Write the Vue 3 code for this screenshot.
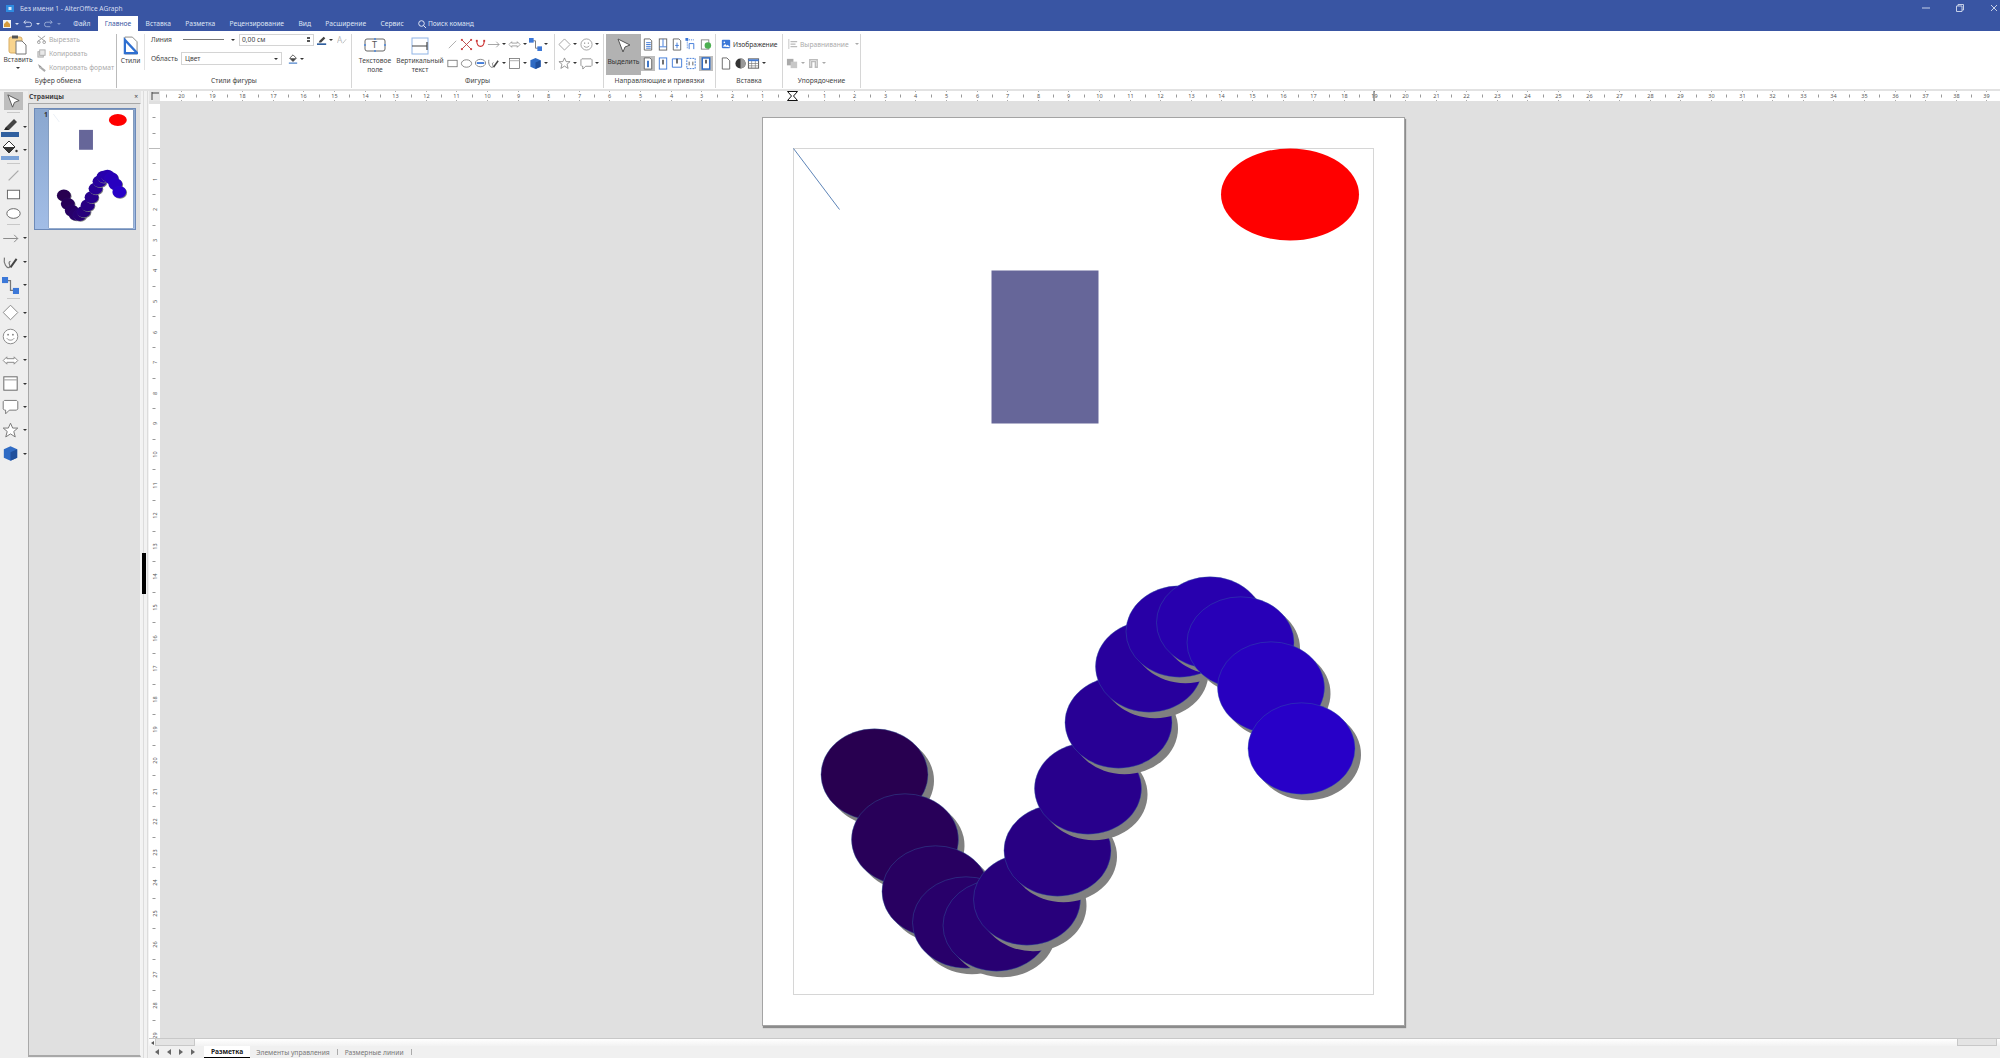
<template>
  <div class="app">
    <svg class="defs" width="0" height="0">
      <defs>
        <g id="shapes">
          <line x1="31" y1="31" x2="77" y2="92" stroke="#3465a4" stroke-width="0.8" />
          <ellipse cx="527.5" cy="77" rx="69" ry="46" fill="#ff0000" />
          <rect x="229" y="153" width="107" height="153" fill="#666699" />
          <g v-for="(e, i) in blobs" :key="i">
            <ellipse :cx="e.x + 6" :cy="e.y + 6" rx="53.5" ry="45.7" fill="#808080" />
            <ellipse :cx="e.x" :cy="e.y" rx="53.5" ry="45.7" :fill="e.color" stroke="#3465a4" stroke-width="0.4" />
          </g>
        </g>
        <symbol id="i-paste" viewBox="0 0 20 20">
          <rect x="1" y="2" width="13" height="16" rx="2" fill="#f8d48e" stroke="#d9ad62" />
          <rect x="4" y="0.5" width="6" height="3" fill="#555" />
          <path d="M8 6h6l4 4v9H8z" fill="#fff" stroke="#777" />
        </symbol>
        <symbol id="i-cut" viewBox="0 0 10 10">
          <path d="M1 1l8 6M9 1L1 7" stroke="#999" fill="none" />
          <circle cx="2" cy="8" r="1.5" fill="none" stroke="#999" />
          <circle cx="8" cy="8" r="1.5" fill="none" stroke="#999" />
        </symbol>
        <symbol id="i-copy" viewBox="0 0 10 10">
          <rect x="1" y="3" width="6" height="6" fill="#ddd" stroke="#aaa" />
          <rect x="3" y="1" width="6" height="6" fill="#e8e8e8" stroke="#aaa" />
        </symbol>
        <symbol id="i-brush" viewBox="0 0 10 10">
          <path d="M1 1l4 3-2 2z" fill="#999" />
          <path d="M4 5l5 4" stroke="#aaa" stroke-width="2.4" />
        </symbol>
        <symbol id="i-styles" viewBox="0 0 16 20">
          <path d="M2 1h8l5 5v13H2z" fill="#fff" stroke="#888" />
          <path d="M2 4v14h13z" fill="none" stroke="#2f6fd0" stroke-width="2.4" />
        </symbol>
        <symbol id="i-pen" viewBox="0 0 12 12">
          <path d="M3 7l5-5 2 2-5 5H2z" fill="#444" />
          <rect x="0" y="10" width="11" height="2" fill="#2f5f9f" />
        </symbol>
        <symbol id="i-bucket" viewBox="0 0 12 12">
          <path d="M6 1l4 4-4 4-4-4z" fill="#fff" stroke="#444" />
          <path d="M2 5h8l-4 4z" fill="#444" />
          <rect x="1" y="10" width="10" height="2" fill="#7ba3d8" />
        </symbol>
        <symbol id="t-pen" viewBox="0 0 18 22">
          <path d="M5 11l8-8 3 3-8 8H4z" fill="#444" />
          <path d="M3 14l2-3 3 3z" fill="#222" />
          <rect x="0" y="16" width="18" height="5" fill="#2f5f9f" />
        </symbol>
        <symbol id="t-bucket" viewBox="0 0 18 22">
          <path d="M8 2l6 6-6 6-6-6z" fill="#fff" stroke="#333" />
          <path d="M2 8h12l-6 6z" fill="#333" />
          <circle cx="15.500" cy="12" r="1.200" fill="#333" />
          <rect x="0" y="17" width="18" height="4" fill="#7ba3d8" />
        </symbol>
        <symbol id="i-aa" viewBox="0 0 12 12">
          <text x="0" y="10" font-size="10" fill="#bbb" font-family="Noto Sans, sans-serif">A</text>
          <path d="M7 10l4-5" stroke="#bbb" />
        </symbol>
        <symbol id="i-textbox" viewBox="0 0 24 16">
          <rect x="2" y="2" width="20" height="12" rx="2" fill="none" stroke="#666" />
          <text x="9" y="11" font-size="9" fill="#555" font-family="Noto Sans, sans-serif">T</text>
          <circle cx="2" cy="8" r="1" fill="#4a86d8" /><circle cx="22" cy="8" r="1" fill="#4a86d8" />
          <circle cx="12" cy="2" r="1" fill="#4a86d8" /><circle cx="12" cy="14" r="1" fill="#4a86d8" />
        </symbol>
        <symbol id="i-vtext" viewBox="0 0 18 18">
          <rect x="1" y="1" width="16" height="16" fill="none" stroke="#8fb4e6" />
          <path d="M1 9h15M16 5v8" stroke="#444" stroke-width="1.2" fill="none" />
        </symbol>
        <symbol id="i-line" viewBox="0 0 14 14"><path d="M3 11l8-8" stroke="#aaa" /></symbol>
        <symbol id="i-points" viewBox="0 0 14 14">
          <path d="M2 2l10 10M12 2L2 12" stroke="#b44" />
          <g fill="#c44"><rect x="1" y="1" width="2" height="2" /><rect x="11" y="1" width="2" height="2" /><rect x="1" y="11" width="2" height="2" /><rect x="11" y="11" width="2" height="2" /></g>
        </symbol>
        <symbol id="i-bezier" viewBox="0 0 14 14">
          <path d="M3 3c0 8 8 8 8 0" stroke="#c33" fill="none" stroke-width="1.2" />
          <rect x="2" y="2" width="2" height="2" fill="#c33" /><rect x="10" y="2" width="2" height="2" fill="#c33" />
        </symbol>
        <symbol id="i-arrow" viewBox="0 0 14 14"><path d="M1 7h12M10 4l3 3-3 3" stroke="#888" fill="none" stroke-width=".8" /></symbol>
        <symbol id="i-dbl" viewBox="0 0 14 14"><path d="M4 4L1 7l3 3V8.500h6V10l3-3-3-3v1.500H4z" fill="#fff" stroke="#888" stroke-width=".8" /></symbol>
        <symbol id="i-conn" viewBox="0 0 14 14">
          <path d="M3 3h4v8h4" stroke="#777" fill="none" />
          <rect x="0" y="0" width="5" height="5" fill="#3c78d8" /><rect x="9" y="9" width="5" height="5" fill="#3c78d8" />
        </symbol>
        <symbol id="i-rect" viewBox="0 0 14 14"><rect x="2" y="3.500" width="10" height="7" fill="#fff" stroke="#666" stroke-width=".8" /></symbol>
        <symbol id="i-ell" viewBox="0 0 14 14"><ellipse cx="7" cy="7" rx="5.500" ry="4" fill="#fff" stroke="#666" stroke-width=".8" /></symbol>
        <symbol id="i-callout" viewBox="0 0 14 14">
          <ellipse cx="7" cy="6.500" rx="5.500" ry="4" fill="#fff" stroke="#666" stroke-width=".8" />
          <path d="M3 6.500h8" stroke="#3c78d8" stroke-width="2" />
        </symbol>
        <symbol id="i-curve" viewBox="0 0 14 14">
          <path d="M2 3c-1 5 2 9 4 8s-2-4 1-5" stroke="#777" fill="none" />
          <path d="M7 11l5-7" stroke="#444" stroke-width="1.6" />
        </symbol>
        <symbol id="i-frame" viewBox="0 0 14 14">
          <rect x="1.500" y="1.500" width="11" height="11" fill="#fff" stroke="#666" stroke-width=".8" />
          <path d="M1.500 4h11" stroke="#aaa" />
        </symbol>
        <symbol id="i-cube" viewBox="0 0 14 14">
          <path d="M7 1l5.500 2.500v7L7 13l-5.500-2.500v-7z" fill="#2f6bc4" />
          <path d="M7 6l5.500-2.500v7L7 13z" fill="#1f4f9c" />
        </symbol>
        <symbol id="i-diamond" viewBox="0 0 14 14"><path d="M7 1l6 6-6 6-6-6z" fill="#fff" stroke="#888" stroke-width=".8" /></symbol>
        <symbol id="i-smile" viewBox="0 0 14 14">
          <circle cx="7" cy="7" r="6" fill="#fff" stroke="#888" stroke-width=".8" />
          <path d="M4 8.500c1.500 2 4.500 2 6 0" stroke="#888" fill="none" stroke-width=".8" />
          <circle cx="5" cy="5.500" r=".7" fill="#777" /><circle cx="9" cy="5.500" r=".7" fill="#777" />
        </symbol>
        <symbol id="i-star" viewBox="0 0 14 14"><path d="M7 1l1.800 4h4.200l-3.300 2.800 1.200 4.500L7 9.800l-3.900 2.500 1.200-4.500L1 5h4.200z" fill="#fff" stroke="#777" stroke-width=".8" /></symbol>
        <symbol id="i-speech" viewBox="0 0 14 14"><path d="M2 2h10l1 1v6l-1 1H6l-3 3v-3H2l-1-1V3z" fill="#fff" stroke="#777" stroke-width=".8" /></symbol>
        <symbol id="i-cursor" viewBox="0 0 18 18"><path d="M3 2l12 6-5 2-2 5z" fill="#fff" stroke="#555" /></symbol>
        <symbol id="i-doc" viewBox="0 0 12 14"><path d="M2 1h5l3 3v9H2z" fill="#fff" stroke="#666" /></symbol>
        <symbol id="g1" viewBox="0 0 12 14"><path d="M2 1h6l2 2v10H2z" fill="#fff" stroke="#666" /><path d="M4 5h5M4 7h5M4 9h5M4 11h5" stroke="#3c78d8" /></symbol>
        <symbol id="g2" viewBox="0 0 12 14"><rect x="2" y="1" width="8" height="12" fill="#fff" stroke="#666" /><path d="M6 1v8M2 9.500h8" stroke="#3c78d8" /></symbol>
        <symbol id="g3" viewBox="0 0 12 14"><path d="M2 1h6l2 2v10H2z" fill="#fff" stroke="#666" /><path d="M6 5v6M4 8h4" stroke="#3c78d8" /></symbol>
        <symbol id="g4" viewBox="0 0 12 14"><path d="M2 2h8M2 2v10" stroke="#3c78d8" stroke-dasharray="1 1" /><path d="M4 12V6h5v6" stroke="#3c78d8" fill="none" /><rect x="0" y="0" width="3" height="3" fill="#3c78d8" /></symbol>
        <symbol id="g5" viewBox="0 0 12 14"><rect x="1" y="2" width="8" height="10" fill="#fff" stroke="#888" /><circle cx="8" cy="8" r="3.500" fill="#4caf50" /></symbol>
        <symbol id="g6" viewBox="0 0 12 14"><path d="M2 1h6l2 2v10H2z" fill="#fff" stroke="#666" /><path d="M6 4v7" stroke="#2f6bc4" stroke-width="2" /></symbol>
        <symbol id="g7" viewBox="0 0 12 14"><rect x="2" y="1" width="8" height="12" fill="#fff" stroke="#3c78d8" /><path d="M6 3v5" stroke="#333" stroke-width="1.500" /></symbol>
        <symbol id="g8" viewBox="0 0 12 14"><path d="M1 2h10v9H1z" fill="#fff" stroke="#3c78d8" /><path d="M6 2v5" stroke="#333" stroke-width="1.500" /></symbol>
        <symbol id="g9" viewBox="0 0 12 14"><rect x="1.500" y="1.500" width="9" height="11" fill="none" stroke="#3c78d8" stroke-dasharray="2 1" /><path d="M4 5v4M8 5v4" stroke="#555" /></symbol>
        <symbol id="g10" viewBox="0 0 12 14"><rect x="2" y="1" width="8" height="12" fill="#fff" stroke="#2f6bc4" stroke-width="1.600" /><path d="M6 3v4" stroke="#222" stroke-width="1.500" /></symbol>
        <symbol id="i-image" viewBox="0 0 12 12">
          <rect x="1" y="1" width="10" height="10" rx="1" fill="#3c78d8" />
          <path d="M2 9l3-3 2 2 1-1 3 3z" fill="#fff" /><circle cx="4" cy="4" r="1" fill="#fff" />
        </symbol>
        <symbol id="i-pie" viewBox="0 0 14 14">
          <circle cx="7" cy="7" r="5.500" fill="#333" />
          <path d="M7 1.500a5.500 5.500 0 0 1 0 11z" fill="#999" />
        </symbol>
        <symbol id="i-table" viewBox="0 0 14 14">
          <rect x="1.500" y="2" width="11" height="10" fill="#fff" stroke="#555" />
          <path d="M1.500 3.500h11" stroke="#3c78d8" stroke-width="2" />
          <path d="M1.500 7h11M1.500 9.500h11M5 4v8M9 4v8" stroke="#777" stroke-width=".7" />
        </symbol>
        <symbol id="i-align" viewBox="0 0 12 12"><path d="M1 0v12" stroke="#bbb" /><path d="M3 3h8M3 6h6M3 9h8" stroke="#bbb" stroke-width="1.500" /></symbol>
        <symbol id="i-order" viewBox="0 0 14 14">
          <rect x="1" y="2" width="7" height="7" fill="#aaa" /><rect x="5" y="5" width="7" height="7" fill="#c8c8c8" />
        </symbol>
        <symbol id="i-group" viewBox="0 0 14 14"><path d="M3 3h8v8h-2V5H5v6H3z" fill="none" stroke="#bbb" stroke-width="1.500" /></symbol>
      </defs>
    </svg>

    <header class="titlebar">
      <svg class="app-icon" viewBox="0 0 8 7"><rect width="8" height="7" fill="#2f8be0" /><rect x="2.500" y="2" width="3" height="3" fill="#dbe8fa" /></svg>
      <span class="title">Без имени 1 - AlterOffice AGraph</span>
      <div class="win-controls">
        <svg viewBox="0 0 8 8"><path d="M0 4h8" stroke="#c6d0e8" /></svg>
        <svg viewBox="0 0 8 8"><path d="M2 2V.5h5.500V6H6M.5 2h5.500v5.500H.5z" fill="none" stroke="#c6d0e8" /></svg>
        <svg viewBox="0 0 8 8"><path d="M1 1l6 6M7 1L1 7" stroke="#c6d0e8" /></svg>
      </div>
    </header>

    <nav class="menubar">
      <div class="quick">
        <svg class="q-home" viewBox="0 0 8 8"><rect width="8" height="8" fill="#f2f2f2" /><path d="M1 4l3-3 3 3v3H1z" fill="#d59a3c" /></svg>
        <i class="caret light"></i>
        <svg class="q-undo" viewBox="0 0 10 8"><path d="M1 2h6a2.500 2.500 0 0 1 0 5H3M3 0L1 2l2 2" fill="none" stroke="#d6def0" /></svg>
        <i class="caret light"></i>
        <svg class="q-undo" viewBox="0 0 10 8"><path d="M9 2H3a2.500 2.500 0 0 0 0 5h4M7 0l2 2-2 2" fill="none" stroke="#9fb0d8" /></svg>
        <i class="caret dim"></i>
      </div>
      <a v-for="tab in tabs" :key="tab" class="tab" :class="{ active: tab === 'Главное' }">{{ tab }}</a>
      <span class="search">
        <svg viewBox="0 0 8 8"><circle cx="3.500" cy="3.500" r="2.800" fill="none" stroke="#dfe6f5" /><path d="M5.500 5.500L8 8" stroke="#dfe6f5" /></svg>
        Поиск команд
      </span>
    </nav>

    <section class="ribbon">
      <div class="group g-clip">
        <div class="body">
          <div class="paste">
            <svg class="ic20"><use href="#i-paste" /></svg>
            <span class="lbl">Вставить</span>
            <i class="caret"></i>
          </div>
          <ul class="clip-list">
            <li><svg class="ic9"><use href="#i-cut" /></svg>Вырезать</li>
            <li><svg class="ic9"><use href="#i-copy" /></svg>Копировать</li>
            <li><svg class="ic9"><use href="#i-brush" /></svg>Копировать формат</li>
          </ul>
        </div>
        <div class="glabel">Буфер обмена</div>
      </div>

      <div class="group g-style">
        <div class="body">
          <div class="styles-btn">
            <svg class="ic-styles"><use href="#i-styles" /></svg>
            <span class="lbl">Стили</span>
          </div>
          <div class="style-form">
            <div class="form-row">
              <span class="f-label w32">Линия</span>
              <span class="line-preview"></span>
              <i class="caret mc"></i>
              <span class="spin">0,00 см<b class="spin-arrows"><i></i><i></i></b></span>
              <svg class="ic10 ml3"><use href="#i-pen" /></svg>
              <i class="caret ml2"></i>
              <svg class="ic10 ml4"><use href="#i-aa" /></svg>
            </div>
            <div class="form-row">
              <span class="f-label w30">Область</span>
              <span class="combo">Цвет<i class="caret"></i></span>
              <svg class="ic10 ml6"><use href="#i-bucket" /></svg>
              <i class="caret ml2"></i>
            </div>
          </div>
        </div>
        <div class="glabel">Стили фигуры</div>
      </div>

      <div class="group g-shapes">
        <div class="body">
          <div class="big-btn w46">
            <svg class="ic-textbox"><use href="#i-textbox" /></svg>
            <span class="lbl">Текстовое<br />поле</span>
          </div>
          <div class="big-btn w44">
            <svg class="ic-vtext"><use href="#i-vtext" /></svg>
            <span class="lbl">Вертикальный<br />текст</span>
          </div>
          <div class="shape-rows">
            <div v-for="(row, r) in shapeRows" :key="r" class="icon-row">
              <span v-for="s in row" :key="s.id" class="cell" :class="{ wide: s.caret }">
                <svg class="ic13"><use :href="'#' + s.id" /></svg>
                <i v-if="s.caret" class="caret"></i>
              </span>
            </div>
          </div>
          <span class="inner-sep"></span>
          <div class="shape-rows more">
            <div v-for="(row, r) in moreShapes" :key="r" class="icon-row">
              <span v-for="s in row" :key="s" class="cell wide">
                <svg class="ic13"><use :href="'#' + s" /></svg>
                <i class="caret"></i>
              </span>
            </div>
          </div>
        </div>
        <div class="glabel">Фигуры</div>
      </div>

      <div class="group g-guides">
        <div class="body">
          <div class="select-btn">
            <svg class="ic18"><use href="#i-cursor" /></svg>
            <span class="lbl">Выделить</span>
          </div>
          <div class="guide-rows">
            <div v-for="(row, r) in guideRows" :key="r" class="icon-row">
              <span v-for="g in row" :key="g" class="g-cell" :class="{ on: g === 'g6' || g === 'g10' }">
                <svg class="ic12"><use :href="'#' + g" /></svg>
              </span>
            </div>
          </div>
        </div>
        <div class="glabel">Направляющие и привязки</div>
      </div>

      <div class="group g-insert">
        <div class="body col">
          <div class="icon-row text-row strong">
            <svg class="ic10"><use href="#i-image" /></svg>Изображение
          </div>
          <div class="icon-row">
            <span class="cell"><svg class="ic12"><use href="#i-doc" /></svg></span>
            <span class="cell"><svg class="ic13"><use href="#i-pie" /></svg></span>
            <span class="cell wide"><svg class="ic13"><use href="#i-table" /></svg><i class="caret"></i></span>
          </div>
        </div>
        <div class="glabel">Вставка</div>
      </div>

      <div class="group g-order">
        <div class="body col">
          <div class="icon-row text-row dim-text">
            <svg class="ic10"><use href="#i-align" /></svg>Выравнивание<i class="caret grey ml4"></i>
          </div>
          <div class="icon-row">
            <span class="cell wide"><svg class="ic13"><use href="#i-order" /></svg><i class="caret grey"></i></span>
            <span class="cell wide"><svg class="ic13"><use href="#i-group" /></svg><i class="caret grey"></i></span>
          </div>
        </div>
        <div class="glabel">Упорядочение</div>
      </div>
    </section>

    <div class="workspace">
      <aside class="toolbox">
        <template v-for="(t, i) in tools" :key="i">
          <div v-if="t.sep" class="tool-sep" :style="{ height: t.h + 'px' }"><span></span></div>
          <div v-else class="tool" :class="{ picked: t.picked, inset: t.inset, color: t.color }" :style="{ height: t.h + 'px' }">
            <svg class="ic-tool"><use :href="'#' + t.icon" /></svg>
            <i v-if="t.caret" class="caret"></i>
          </div>
        </template>
      </aside>

      <aside class="pages">
        <div class="pages-head"><strong>Страницы</strong><span>×</span></div>
        <div class="pages-body">
          <div class="thumb">
            <span class="thumb-no">1</span>
            <svg class="thumb-page" viewBox="0 0 642 908"><use href="#shapes" /></svg>
          </div>
        </div>
      </aside>

      <div class="splitter"><span class="grip"></span></div>

      <main class="main">
        <div class="ruler-row">
          <div class="corner"><svg viewBox="0 0 11 10"><path d="M3 1v8M3 2h7" stroke="#444" /></svg></div>
          <svg class="h-ruler" width="1840" height="10">
            <g v-for="t in hTicks" :key="t.x">
              <template v-if="t.label">
                <path :d="`M${t.x} 0v1M${t.x} 9v1`" stroke="#aaa" />
                <text :x="t.x" y="7" text-anchor="middle" class="rt">{{ t.label }}</text>
              </template>
              <path v-else :d="`M${t.x} 3.500v3`" stroke="#999" />
            </g>
            <path d="M627.500 0.500h10l-4 4.500 4 4.500h-10l4-4.500z" fill="#fff" stroke="#111" />
            <path d="M1214 0v10" stroke="#555" />
          </svg>
        </div>

        <div class="center-row">
          <div class="v-col">
            <svg class="v-ruler" width="11" height="934">
              <rect x="0" y="0" width="11" height="44" fill="#fff" />
              <path d="M0 44.500h11" stroke="#bbb" />
              <g v-for="t in vTicks" :key="t.y">
                <text v-if="t.label" x="5.500" :y="t.y" text-anchor="middle" dy="2" class="rt" :transform="`rotate(-90 5.500 ${t.y})`">{{ t.label }}</text>
                <path v-else :d="`M3.500 ${t.y}h3`" stroke="#999" />
              </g>
            </svg>
          </div>
          <div class="canvas">
            <div class="page">
              <svg viewBox="0.5 0.5 641 907" width="641" height="907">
                <rect x="31" y="31" width="580" height="846" fill="none" stroke="#d6d6d6" />
                <use href="#shapes" />
              </svg>
            </div>
          </div>
        </div>

        <div class="scroll-row">
          <i class="arrow-left"></i>
          <span class="thumb-l"></span>
          <span class="thumb-r"></span>
        </div>

        <div class="sheet-row">
          <div class="sheet-nav"><i></i><i></i><i class="r"></i><i class="r"></i></div>
          <a class="sheet active">Разметка</a>
          <a class="sheet">Элементы управления</a><span class="bar"></span>
          <a class="sheet">Размерные линии</a><span class="bar"></span>
        </div>
      </main>
    </div>
  </div>
</template>

<script setup>
import { computed } from 'vue'

const tabs = ['Файл', 'Главное', 'Вставка', 'Разметка', 'Рецензирование', 'Вид', 'Расширение', 'Сервис']

const shapeRows = [
  [{ id: 'i-line' }, { id: 'i-points' }, { id: 'i-bezier' }, { id: 'i-arrow', caret: true }, { id: 'i-dbl', caret: true }, { id: 'i-conn', caret: true }],
  [{ id: 'i-rect' }, { id: 'i-ell' }, { id: 'i-callout' }, { id: 'i-curve', caret: true }, { id: 'i-frame', caret: true }, { id: 'i-cube', caret: true }]
]
const moreShapes = [['i-diamond', 'i-smile'], ['i-star', 'i-speech']]
const guideRows = [['g1', 'g2', 'g3', 'g4', 'g5'], ['g6', 'g7', 'g8', 'g9', 'g10']]

const tools = [
  { icon: 'i-cursor', h: 18, picked: true },
  { sep: true, h: 5 },
  { icon: 't-pen', h: 23, caret: true, color: true },
  { icon: 't-bucket', h: 23, caret: true, color: true },
  { sep: true, h: 4 },
  { icon: 'i-line', h: 20, inset: true },
  { icon: 'i-rect', h: 18, inset: true },
  { icon: 'i-ell', h: 20, inset: true },
  { sep: true, h: 3 },
  { icon: 'i-arrow', h: 24, caret: true },
  { icon: 'i-curve', h: 24, caret: true },
  { icon: 'i-conn', h: 22, caret: true },
  { sep: true, h: 4 },
  { icon: 'i-diamond', h: 25, caret: true },
  { icon: 'i-smile', h: 23, caret: true },
  { icon: 'i-dbl', h: 24, caret: true },
  { icon: 'i-frame', h: 23, caret: true },
  { icon: 'i-speech', h: 23, caret: true },
  { icon: 'i-star', h: 24, caret: true },
  { icon: 'i-cube', h: 23, caret: true }
]

// vertical centres measured on the page, x steps evenly
const blobRows = [657, 722, 774, 805, 808, 782, 733, 671, 605, 549, 514, 505, 525, 570, 631]

const blobs = computed(() => blobRows.map((y, i) => ({
  x: 112 + i * 30.5,
  y,
  color: `rgb(40, 0, ${Math.round(80 + (i * 120) / 14)})`
})))

const CM = 30.6
const hZero = 793 - 160
const vZero = 44

const hTicks = computed(() => {
  const out = []
  for (let n = -41; n <= 80; n++) {
    const x = Math.round(hZero + (n * CM) / 2) + 0.5
    if (x < 0 || x > 1840) continue
    if (n === 0) continue
    const even = n % 2 === 0
    out.push({ x, label: even ? String(Math.abs(n / 2)) : '' })
  }
  return out
})

const vTicks = computed(() => {
  const out = []
  for (let n = -2; n <= 58; n++) {
    if (n === 0) continue
    const y = Math.round(vZero + (n * CM) / 2) + 0.5
    if (y < 0 || y > 934) continue
    const even = n % 2 === 0
    out.push({ y, label: even && n > 0 ? String(n / 2) : '' })
  }
  return out
})
</script>

<style>
html, body {
  margin: 0;
  overflow: hidden;
}
</style>

<style scoped>
.app {
  width: 2000px;
  height: 1058px;
  display: flex;
  flex-direction: column;
  overflow: hidden;
  background: #eeeeee;
  font-family: "Noto Sans", "Open Sans", sans-serif;
  font-size: 6.700px;
  color: #444;
}
.defs { position: absolute; }

.titlebar {
  height: 16px;
  background: #3955a3;
  display: flex;
  align-items: center;
  color: #d6ddef;
  padding-left: 6px;
}
.app-icon { width: 8px; height: 7px; margin-right: 6px; }
.title { font-size: 6.600px; }
.win-controls { margin-left: auto; display: flex; }
.win-controls svg { width: 8px; height: 8px; margin-left: 26px; }
.win-controls svg:last-child { margin-right: 2px; }

.menubar {
  height: 15px;
  background: #3955a3;
  display: flex;
  align-items: stretch;
  color: #dfe5f4;
}
.quick { width: 66px; display: flex; align-items: center; padding-left: 3px; box-sizing: border-box; }
.q-home { width: 8px; height: 8px; }
.q-undo { width: 9px; height: 8px; margin-left: 4px; }
.tab { padding: 0 7.200px; display: flex; align-items: center; }
.tab.active { background: #fff; color: #3955a3; }
.search { display: flex; align-items: center; margin-left: 7px; }
.search svg { width: 8px; height: 8px; margin-right: 2px; }

.caret {
  display: inline-block;
  width: 0;
  height: 0;
  border-left: 2.500px solid transparent;
  border-right: 2.500px solid transparent;
  border-top: 2.500px solid #333;
  flex: none;
}
.caret.light { border-top-color: #d6def0; margin-left: 4px; }
.caret.dim { border-top-color: #7f93c8; margin-left: 4px; }
.caret.grey { border-top-color: #aaa; }

.ribbon {
  height: 58px;
  background: #fff;
  display: flex;
  border-bottom: 2px solid #e2e2e2;
}
.group {
  display: flex;
  flex-direction: column;
  border-right: 1px solid #d6d6d6;
  margin: 3px 0 1px;
  box-sizing: border-box;
}
.body { height: 41px; display: flex; }
.body.col { flex-direction: column; padding-top: 3px; box-sizing: border-box; }
.glabel { text-align: center; line-height: 12px; padding-top: 0; }

.g-clip { width: 117px; border-right-color: #bbb; }
.g-style { width: 235px; }
.g-shapes { width: 252px; }
.g-guides { width: 112px; }
.g-insert { width: 67px; }
.g-order { width: 78px; }

.lbl { line-height: 9px; text-align: center; color: #444; }
.ic20 { width: 20px; height: 20px; flex: none; }
.ic18 { width: 18px; height: 18px; }
.ic13 { width: 13px; height: 13px; }
.ic12 { width: 12px; height: 13px; }
.ic10 { width: 10px; height: 10px; flex: none; }
.ic9 { width: 9px; height: 9px; margin-right: 3px; flex: none; }
.ic-styles { width: 15px; height: 19px; }
.ic-textbox { width: 24px; height: 16px; }
.ic-vtext { width: 18px; height: 18px; }

.paste { width: 36px; display: flex; flex-direction: column; align-items: center; padding-top: 1px; }
.paste .lbl { margin-top: 0; }
.paste .caret { margin-top: 3px; }
.clip-list { list-style: none; margin: -2px 0 0; padding: 0 0 0 1px; color: #aaa; white-space: nowrap; }
.clip-list li { height: 14px; display: flex; align-items: center; }

.styles-btn {
  width: 28px;
  height: 36px;
  display: flex;
  flex-direction: column;
  align-items: center;
  padding-top: 2px;
  border-right: 1px solid #e2e2e2;
  box-sizing: border-box;
}
.styles-btn .lbl { margin-top: 1px; }
.style-form { padding: 0 0 0 6px; display: flex; flex-direction: column; gap: 6px; margin-top: -1px; }
.form-row { height: 13px; display: flex; align-items: center; }
.f-label { flex: none; }
.w32 { width: 32px; }
.w30 { width: 30px; }
.line-preview { width: 41px; height: 1px; background: #777; }
.caret.mc { margin: 0 4px 0 7px; }
.spin {
  width: 75px;
  height: 12px;
  border: 1px solid #d4d4d4;
  box-sizing: border-box;
  padding-left: 2px;
  display: flex;
  align-items: center;
  justify-content: space-between;
  color: #444;
}
.spin-arrows { display: flex; flex-direction: column; gap: 1px; margin-right: 3px; }
.spin-arrows i { width: 3px; height: 2px; background: #555; }
.combo {
  width: 101px;
  height: 13px;
  border: 1px solid #d4d4d4;
  box-sizing: border-box;
  padding: 0 3px;
  display: flex;
  align-items: center;
  justify-content: space-between;
}
.ml2 { margin-left: 2px; }
.ml3 { margin-left: 3px; }
.ml4 { margin-left: 4px; }
.ml6 { margin-left: 6px; }

.big-btn { display: flex; flex-direction: column; align-items: center; padding-top: 3px; box-sizing: border-box; }
.big-btn .lbl { margin-top: 1px; white-space: nowrap; }
.w46 { width: 46px; }
.w44 { width: 44px; }
.ic-textbox + .lbl { margin-top: 3px; }
.shape-rows { display: flex; flex-direction: column; gap: 5px; padding: 3px 0 0 3px; width: 112px; box-sizing: border-box; }
.shape-rows.more { width: 47px; padding-left: 3px; }
.shape-rows.more .cell.wide { width: 22px; }
.icon-row { display: flex; height: 14px; align-items: center; }
.cell { width: 14px; display: flex; align-items: center; justify-content: center; flex: none; }
.cell.wide { width: 21px; justify-content: flex-start; }
.cell.wide .caret { margin-left: 2px; }
.inner-sep { width: 1px; height: 36px; background: #d6d6d6; flex: none; }

.select-btn {
  width: 35px;
  height: 41px;
  margin-left: 2px;
  background: #b2b2b2;
  display: flex;
  flex-direction: column;
  align-items: center;
  padding-top: 3px;
  box-sizing: border-box;
  color: #333;
}
.select-btn .lbl { margin-top: 2px; color: #333; }
.guide-rows { display: flex; flex-direction: column; gap: 5px; padding-top: 3px; }
.g-cell { width: 14.400px; height: 15px; display: flex; align-items: center; justify-content: center; }
.g-cell.on { background: #bdbdbd; }

.text-row { gap: 2px; padding-left: 9px; height: 14px; }
.g-insert .icon-row { padding-left: 3px; margin-bottom: 5px; }
.g-insert .text-row { padding-left: 5px; }
.g-order .icon-row { padding-left: 3px; margin-bottom: 5px; }
.g-order .text-row { padding-left: 5px; }
.strong { color: #333; }
.dim-text { color: #aaa; }

.workspace { flex: 1; display: flex; min-height: 0; }

.toolbox { width: 28px; flex: none; padding-top: 1px; box-sizing: border-box; background: #eeeeee; }
.tool { display: flex; align-items: center; padding-left: 2px; width: 28px; box-sizing: border-box; }
.tool.picked { background: #bdbdbd; width: 19px; margin-left: 4px; padding-left: 1px; }
.ic-tool { width: 17px; height: 17px; flex: none; }
.tool.inset { padding-left: 5px; }
.tool.color { padding-left: 1px; }
.tool.color .ic-tool { width: 18px; height: 22px; }
.tool .caret { margin-left: 4px; }
.tool.color .caret { margin-left: 4px; }
.tool-sep { display: flex; align-items: center; padding-left: 7px; }
.tool-sep span { width: 13px; height: 1px; background: #c8c8c8; }

.pages { width: 113px; flex: none; display: flex; flex-direction: column; }
.pages-head {
  height: 12px;
  display: flex;
  align-items: center;
  justify-content: space-between;
  padding: 0 3px 2px 1px;
  box-sizing: border-box;
  background: #e6e6e6;
  color: #444;
}
.pages-body {
  flex: 1;
  background: #e0e0e0;
  border: 1px solid #a8a8a8;
  border-width: 1px 1px 2px 1px;
  border-right-color: #f4f4f4;
  padding: 4px 5px;
  margin-bottom: 1px;
}
.thumb {
  width: 102px;
  height: 122px;
  box-sizing: border-box;
  border: 1px solid #6d8ab8;
  background: linear-gradient(#8aa7cf, #a2bde6);
  display: flex;
  padding-top: 1px;
  padding-left: 14px;
  position: relative;
}
.thumb-no { position: absolute; left: 9px; top: 1px; font-weight: 700; color: #333; }
.thumb-page { width: 84px; height: 118px; background: #fff; box-shadow: 0 0 1px #555; }

.splitter {
  width: 8px;
  flex: none;
  background: linear-gradient(90deg, #f2f2f2 0 2px, #dcdcdc 2px 3px, #f2f2f2 3px 6px, #dcdcdc 6px 7px, #f2f2f2 7px);
  position: relative;
}
.grip { position: absolute; left: 1px; top: 462px; width: 4px; height: 41px; background: #000; }

.main { flex: 1; min-width: 0; display: flex; flex-direction: column; }
.ruler-row { height: 10px; display: flex; background: #fff; }
.corner { width: 11px; background: #e6e6e6; flex: none; }
.corner svg { width: 11px; height: 10px; display: block; }
.h-ruler { display: block; flex: none; }
.rt { font-size: 5.500px; fill: #555; font-family: "Noto Sans", sans-serif; }

.center-row { flex: 1; display: flex; min-height: 0; background: #e0e0e0; }
.v-col { width: 11px; flex: none; padding-top: 3px; background: #e0e0e0; }
.v-ruler { display: block; background: #fff; }
.canvas { flex: 1; padding: 17px 0 0 603px; overflow: hidden; box-sizing: border-box; }
.page {
  width: 641px;
  height: 907px;
  background: #fff;
  box-shadow: 0 0 0 1px #a4a4a4, 1px 2px 1px 1px #8c8c8c;
}
.page svg { display: block; }

.scroll-row {
  height: 8px;
  display: flex;
  align-items: stretch;
  border-top: 1px solid #c8c8c8;
  box-sizing: border-box;
  background: linear-gradient(#fff, #f2f2f2);
}
.arrow-left {
  width: 0;
  height: 0;
  align-self: center;
  margin-left: 2px;
  border-top: 2.500px solid transparent;
  border-bottom: 2.500px solid transparent;
  border-right: 3px solid #555;
}
.thumb-l, .thumb-r { width: 40px; background: #e4e4e4; border: 1px solid #c8c8c8; border-width: 0 1px 1px; box-sizing: border-box; }
.thumb-l { margin-left: 1px; }
.thumb-r { margin-left: auto; margin-right: 3px; }

.sheet-row { height: 12px; display: flex; align-items: stretch; background: #f0f0f0; color: #777; }
.sheet-nav { width: 55px; display: flex; align-items: center; gap: 8px; padding-left: 6px; box-sizing: border-box; flex: none; }
.sheet-nav i {
  width: 0;
  height: 0;
  border-top: 3px solid transparent;
  border-bottom: 3px solid transparent;
  border-right: 4px solid #666;
}
.sheet-nav i.r { border-right: 0; border-left: 4px solid #666; }
.sheet { padding: 0 6px; display: flex; align-items: center; }
.sheet.active { background: #fff; color: #222; font-weight: 700; border-bottom: 1px solid #000; padding: 0 7px; }
.bar { width: 1px; height: 6px; background: #aaa; align-self: center; margin: 0 1px; }
</style>
